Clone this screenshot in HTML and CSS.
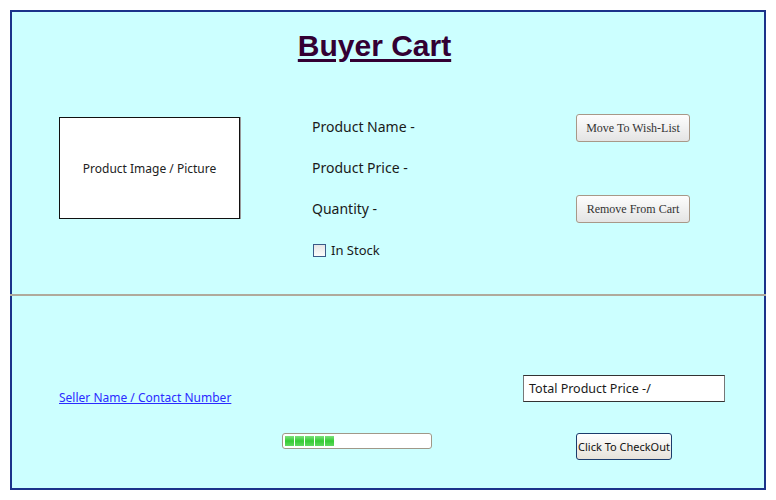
FILE: index.html
```html
<!DOCTYPE html>
<html>
<head>
<meta charset="utf-8">
<link rel="stylesheet" href="styles.css">
</head>
<body>
<div class="frame">
  <section class="top">
    <h1 class="title">Buyer Cart</h1>
    <div class="product-row">
      <div class="image-box">Product Image / Picture</div>
      <div class="details">
        <div class="detail">Product Name -</div>
        <div class="detail">Product Price -</div>
        <div class="detail">Quantity -</div>
        <label class="detail stock"><span class="check"></span>In Stock</label>
      </div>
      <div class="actions">
        <button class="btn">Move To Wish-List</button>
        <button class="btn">Remove From Cart</button>
      </div>
    </div>
  </section>
  <div class="divider"></div>
  <section class="bottom">
    <a class="seller" href="#">Seller Name / Contact Number</a>
    <div class="total">Total Product Price -/</div>
    <div class="progress">
      <span class="blk"></span><span class="blk"></span><span class="blk"></span><span class="blk"></span><span class="blk"></span>
    </div>
    <button class="checkout">Click To CheckOut</button>
  </section>
</div>
</body>
</html>
```
FILE: styles.css
```css
html, body {
  margin: 0;
  padding: 0;
  background: #ffffff;
}
.frame {
  margin: 10px;
  width: 752px;
  height: 476px;
  border: 2px solid #1b338a;
  background: #ccffff;
  font-family: "Noto Sans", "DejaVu Sans", sans-serif;
  color: #1a1a1a;
}
.top {
  height: 282px;
  box-sizing: border-box;
  padding-top: 16px;
}
.title {
  margin: 0;
  padding-right: 27px;
  text-align: center;
  font-family: "Liberation Sans", Arial, sans-serif;
  font-weight: bold;
  font-size: 30px;
  line-height: 36px;
  color: #330033;
  text-decoration: underline;
  text-decoration-thickness: 3px;
  text-underline-offset: 3px;
}
.product-row {
  display: grid;
  grid-template-columns: 181px 336px 114px;
  margin-top: 50px;
  padding-left: 47px;
}
.image-box {
  margin-top: 3px;
  width: 181px;
  height: 102px;
  box-sizing: border-box;
  border: 1px solid #111;
  box-shadow: 1px 0 0 #999;
  background: #fff;
  display: flex;
  align-items: center;
  justify-content: center;
  font-size: 12px;
  color: #222;
}
.details {
  margin-left: 72px;
  display: flex;
  flex-direction: column;
  gap: 15px;
}
.detail {
  height: 26px;
  line-height: 26px;
  font-size: 14px;
}
.stock {
  display: flex;
  align-items: center;
  font-size: 13px;
}
.check {
  width: 11px;
  height: 11px;
  border: 1px solid #3a5a88;
  background: linear-gradient(#e6e6e6, #fbfbfb);
  margin: 0 5px 0 1px;
}
.actions {
  display: flex;
  flex-direction: column;
  gap: 53px;
}
.btn {
  width: 114px;
  height: 28px;
  padding: 0;
  border: 1px solid #a89888;
  border-radius: 3px;
  background: linear-gradient(#fdfdfd, #e4e4e4);
  font-family: "Liberation Serif", "Times New Roman", serif;
  font-size: 12px;
  color: #333;
}
.divider {
  height: 2px;
  margin: 0 -2px;
  background: #b0aa9c;
}
.bottom {
  height: 192px;
  box-sizing: border-box;
  padding: 79px 0 0 47px;
  display: grid;
  grid-template-columns: 223px 241px 53px 188px;
  grid-template-rows: 27px 31px 27px;
}
.seller {
  grid-column: 1 / 3;
  grid-row: 1;
  align-self: end;
  margin-bottom: -5px;
  font-size: 12px;
  line-height: 18px;
  color: #2b2bff;
  text-decoration: underline;
}
.total {
  grid-column: 3 / 5;
  grid-row: 1;
  width: 202px;
  height: 27px;
  box-sizing: border-box;
  border: 1px solid #333;
  border-left-color: #777;
  border-right-color: #777;
  background: #fff;
  font-size: 12.5px;
  line-height: 25px;
  padding-left: 5px;
}
.progress {
  grid-column: 2;
  grid-row: 3;
  width: 150px;
  height: 16px;
  box-sizing: border-box;
  border: 1px solid #a09888;
  border-radius: 3px;
  background: #fff;
  display: flex;
  gap: 1px;
  padding: 2px;
}
.blk {
  width: 9px;
  height: 10px;
  background: linear-gradient(#7ee07e, #33cc33 50%, #5fd85f);
}
.checkout {
  grid-column: 4;
  grid-row: 3;
  width: 96px;
  height: 27px;
  padding: 0;
  border: 1px solid #1c3c6c;
  border-radius: 3px;
  background: linear-gradient(#ffffff, #e6e2da);
  font-family: "Noto Sans", "DejaVu Sans", sans-serif;
  font-size: 11px;
  color: #111;
}
```
